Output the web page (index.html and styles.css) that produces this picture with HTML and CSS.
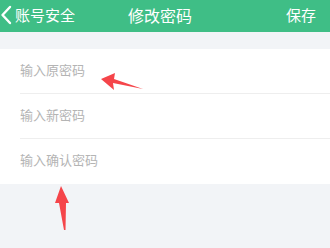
FILE: index.html
```html
<!DOCTYPE html>
<html lang="zh-CN">
<head>
  <meta charset="UTF-8">
  <title>修改密码</title>
  <link rel="stylesheet" href="styles.css">
</head>
<body>
  <div class="header">
    <div class="back">
      <svg class="chevron" width="12" height="20" viewBox="0 0 12 20">
        <path d="M10 2 L2.5 10 L10 18" fill="none" stroke="#fff" stroke-width="2.4" stroke-linecap="round" stroke-linejoin="round"/>
      </svg>
      <span>账号安全</span>
    </div>
    <div class="title">修改密码</div>
    <div class="save">保存</div>
  </div>

  <div class="form">
    <div class="row"><input type="password" placeholder="输入原密码"></div>
    <div class="row"><input type="password" placeholder="输入新密码"></div>
    <div class="row last"><input type="password" placeholder="输入确认密码"></div>
  </div>

  <!-- annotation arrows -->
  <svg class="marks" width="330" height="248" viewBox="0 0 330 248">
    <polygon points="101,79 115,73 114,79 143,89 113,83 114,90" fill="#f5454a"/>
    <polygon points="61,186 69,203 66,203 65.5,230 64,230 59,203 55,203" fill="#f5454a"/>
  </svg>
</body>
</html>
```

FILE: styles.css
```css
body {
  margin: 0;
  background: #f2f4f7;
  font-family: "Noto Sans CJK SC", "Noto Sans", sans-serif;
  width: 330px;
  height: 248px;
  overflow: hidden;
  position: relative;
}
.header {
  height: 32px;
  background: #3fbe86;
  color: #fff;
  display: grid;
  grid-template-columns: 1fr auto 1fr;
  align-items: center;
  padding: 0 14px 3px 0;
  box-sizing: border-box;
}
.back {
  display: flex;
  align-items: center;
  font-size: 15px;
}
.chevron {
  margin: 0 3px 0 0;
}
.title {
  font-size: 16px;
  margin-left: 4px;
}
.save {
  justify-self: end;
  font-size: 15px;
}
.form {
  margin-top: 17px;
  background: white;
}
.row {
  height: 45px;
  margin-left: 20px;
  border-bottom: 1px solid #eeeeee;
  box-sizing: border-box;
  display: flex;
  align-items: center;
}
.row.last {
  border-bottom: none;
}
.row input {
  border: none;
  outline: none;
  padding: 0;
  width: 100%;
  font-family: inherit;
  font-size: 13px;
  background: transparent;
  margin-top: -4px;
}
.row input::placeholder {
  color: #b4b4b4;
}
.marks {
  position: absolute;
  left: 0;
  top: 0;
}
```
